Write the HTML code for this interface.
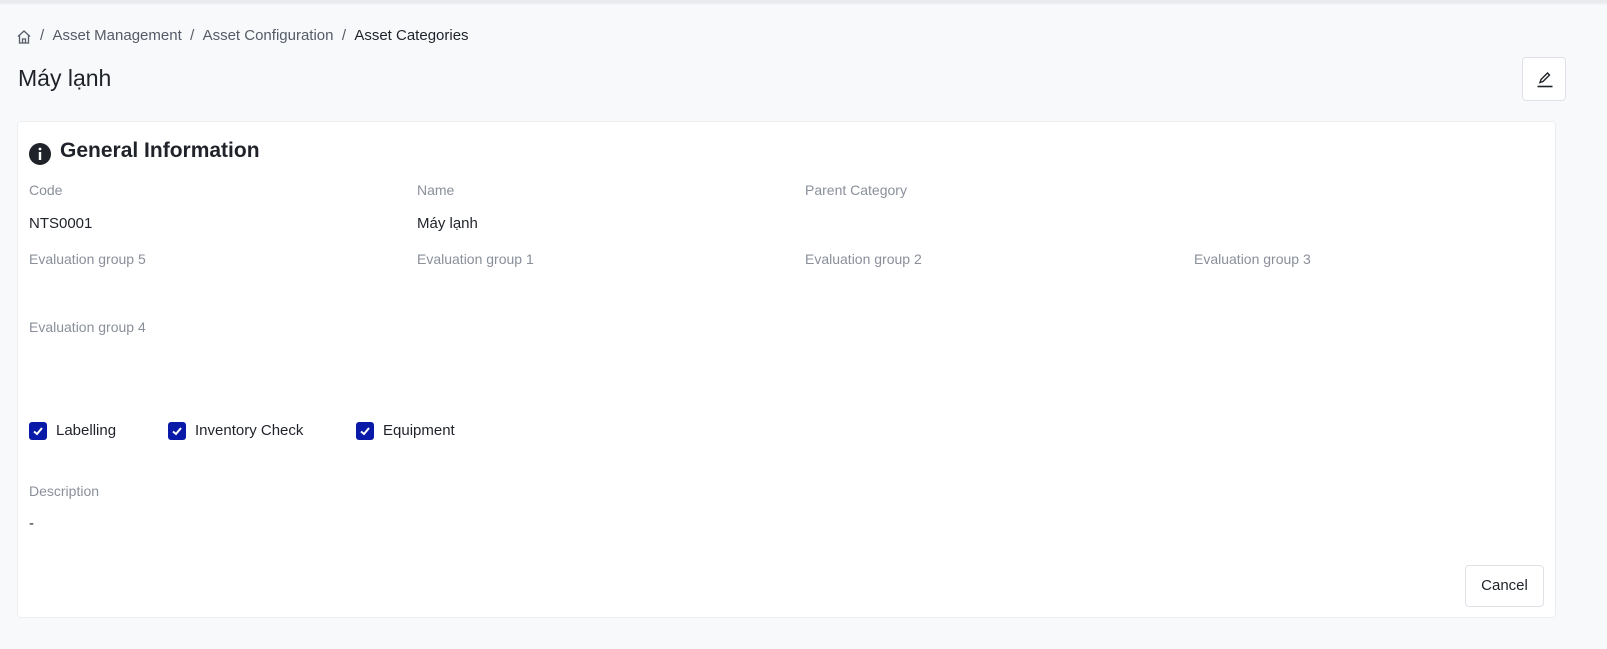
<!DOCTYPE html>
<html><head><meta charset="utf-8"><style>
*{margin:0;padding:0;box-sizing:border-box}
body{width:1607px;height:649px;background:#f8f9fb;font-family:"Liberation Sans",sans-serif;position:relative;overflow:hidden;color:#1f2329}
.a{position:absolute;white-space:nowrap}
.topbar{position:absolute;left:0;top:0;width:1607px;height:3px;background:#e9eaee;box-shadow:0 1px 2px rgba(0,0,0,.06)}
.bc{top:27px;font-size:15px;color:#555b66}
.lbl{font-size:14px;color:#8a8f9a}
.val{font-size:15px;color:#1f2329}
.card{position:absolute;left:17px;top:121px;width:1539px;height:497px;background:#fff;border:1px solid #eceef2;border-radius:4px}
.cb{position:absolute;width:18px;height:18px;background:#0a1aa8;border-radius:3px}
.btn{position:absolute;background:#fff;border:1px solid #dfe1e6;border-radius:4px}
</style></head><body>
<div class="topbar"></div>
<svg class="a" style="left:16px;top:29px" width="16" height="16" viewBox="0 0 16 16" fill="none" stroke="#555b66" stroke-width="1.3"><path d="M2 7.5L8 2l6 5.5M3.5 6.5V14h9V6.5M6.5 14v-4h3v4"/></svg>
<div class="a bc" style="left:40px">/&nbsp;&nbsp;Asset Management&nbsp;&nbsp;/&nbsp;&nbsp;Asset Configuration&nbsp;&nbsp;/&nbsp;&nbsp;<span style="color:#1f2329">Asset Categories</span></div>
<div class="a" style="left:18px;top:65px;font-size:23px;color:#1f2329">Máy lạnh</div>
<div class="btn" style="left:1522px;top:57px;width:44px;height:44px"><svg style="position:absolute;left:13px;top:12px" width="18" height="18" viewBox="0 0 18 18" fill="none" stroke="#1f2329" stroke-width="1.4"><path d="M4 12.5l1-3 6.5-6.5 2 2L7 11.5z"/><path d="M1.5 16.5h15" stroke-width="1.6"/></svg></div>
<div class="card"></div>
<svg class="a" style="left:29px;top:143px" width="22" height="22" viewBox="0 0 22 22"><circle cx="11" cy="11" r="11" fill="#1f2329"/><rect x="9.8" y="9" width="2.4" height="8" fill="#fff"/><circle cx="11" cy="6" r="1.4" fill="#fff"/></svg>
<div class="a" style="left:60px;top:139px;font-size:21px;font-weight:bold;color:#1f2329">General Information</div>
<div class="a lbl" style="left:29px;top:182px">Code</div>
<div class="a lbl" style="left:417px;top:182px">Name</div>
<div class="a lbl" style="left:805px;top:182px">Parent Category</div>
<div class="a val" style="left:29px;top:215px">NTS0001</div>
<div class="a val" style="left:417px;top:215px">Máy lạnh</div>
<div class="a lbl" style="left:29px;top:251px">Evaluation group 5</div>
<div class="a lbl" style="left:417px;top:251px">Evaluation group 1</div>
<div class="a lbl" style="left:805px;top:251px">Evaluation group 2</div>
<div class="a lbl" style="left:1194px;top:251px">Evaluation group 3</div>
<div class="a lbl" style="left:29px;top:319px">Evaluation group 4</div>
<div class="cb" style="left:29px;top:422px"><svg width="18" height="18"><path d="M5 9.5l3 2.5 5-6" stroke="#fff" stroke-width="2" fill="none"/></svg></div>
<div class="a val" style="left:56px;top:422px">Labelling</div>
<div class="cb" style="left:168px;top:422px"><svg width="18" height="18"><path d="M5 9.5l3 2.5 5-6" stroke="#fff" stroke-width="2" fill="none"/></svg></div>
<div class="a val" style="left:195px;top:422px">Inventory Check</div>
<div class="cb" style="left:356px;top:422px"><svg width="18" height="18"><path d="M5 9.5l3 2.5 5-6" stroke="#fff" stroke-width="2" fill="none"/></svg></div>
<div class="a val" style="left:383px;top:422px">Equipment</div>
<div class="a lbl" style="left:29px;top:483px">Description</div>
<div class="a val" style="left:29px;top:515px">-</div>
<div class="btn" style="left:1465px;top:565px;width:79px;height:42px"><div class="a val" style="left:0;width:77px;text-align:center;top:11px;font-size:15px">Cancel</div></div>
</body></html>
